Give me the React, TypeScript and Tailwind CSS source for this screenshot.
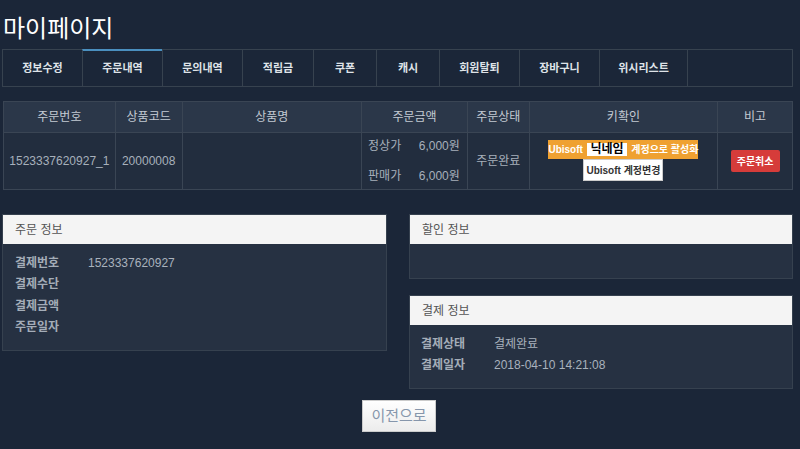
import React from "react"

const font = { fontFamily: '"Liberation Sans", "Noto Sans CJK KR", sans-serif' }

const tabs = [
  { label: "정보수정", w: "w-[80px]" },
  { label: "주문내역", w: "w-[80px]", active: true },
  { label: "문의내역", w: "w-[80px]" },
  { label: "적립금", w: "w-[71px]" },
  { label: "쿠폰", w: "w-[63px]" },
  { label: "캐시", w: "w-[63px]" },
  { label: "회원탈퇴", w: "w-[80px]" },
  { label: "장바구니", w: "w-[80px]" },
  { label: "위시리스트", w: "w-[88px]" },
  { label: "", w: "w-[106px]" },
]

const cols = [
  { title: "주문번호", w: "w-[111px]" },
  { title: "상품코드", w: "w-[67px]" },
  { title: "상품명", w: "w-[180px]" },
  { title: "주문금액", w: "w-[106px]" },
  { title: "주문상태", w: "w-[62px]" },
  { title: "키확인", w: "w-[189px]" },
  { title: "비고", w: "w-[75px]" },
]

function Panel({ title, children, bodyClass }: { title: string; children?: React.ReactNode; bodyClass: string }) {
  return (
    <div className="border border-[#36414f]">
      <div className="h-[29px] bg-[#f4f4f4] flex items-center pl-[12px] text-[12px] text-[#555]">{title}</div>
      <div className={`bg-[#263142] ${bodyClass}`}>{children}</div>
    </div>
  )
}

function InfoRow({ label, value }: { label: string; value?: string }) {
  return (
    <div className="flex h-[21.5px] items-center text-[12px]">
      <span className="w-[73px] font-bold text-[#a4adb8]">{label}</span>
      <span className="text-[#a9b2bd]">{value}</span>
    </div>
  )
}

export default function App() {
  return (
    <div className="w-[800px] h-[449px] overflow-hidden bg-[#1b2638]" style={font}>
      <h1 className="pt-[14px] pl-[3px] text-[24px] leading-[30px] text-white">마이페이지</h1>

      {/* tabs */}
      <div className="mt-[5px] ml-[2px] flex w-[791px] h-[38px] border-b border-[#37424f]">
        {tabs.map((t, i) => (
          <div
            key={i}
            className={`${t.w} flex items-center justify-center text-[11px] font-bold text-[#dfe3e8] ${
              i < tabs.length - 1 ? "border-l" : "border-x"
            } border-[#37424f] ${t.active ? "border-t-2 border-t-[#4a8fbf]" : "border-t"}`}
          >
            {t.label}
          </div>
        ))}
      </div>

      {/* order table */}
      <div className="mt-[14px] ml-[3px] w-[790px] border border-[#3a4554] text-[12px]">
        <div className="flex h-[30px] bg-[#2b3749]">
          {cols.map((c, i) => (
            <div
              key={i}
              className={`${c.w} flex items-center justify-center text-[#c3cad3] ${i > 0 ? "border-l border-[#3a4554]" : ""}`}
            >
              {c.title}
            </div>
          ))}
        </div>
        <div className="flex h-[57px] bg-[#222d3e] border-t border-[#3a4554] text-[#a7b0bb]">
          <div className="w-[111px] flex items-center justify-center">1523337620927_1</div>
          <div className="w-[67px] flex items-center justify-center border-l border-[#3a4554]">20000008</div>
          <div className="w-[180px] border-l border-[#3a4554]"></div>
          <div className="w-[106px] border-l border-[#3a4554] flex flex-col justify-center gap-[12px] pl-[6px] pr-[7px]">
            <div className="flex justify-between">
              <span>정상가</span>
              <span>6,000원</span>
            </div>
            <div className="flex justify-between">
              <span>판매가</span>
              <span>6,000원</span>
            </div>
          </div>
          <div className="w-[62px] flex items-center justify-center border-l border-[#3a4554]">주문완료</div>
          <div className="w-[189px] border-l border-[#3a4554] flex flex-col items-center pt-[7px]">
            <div className="h-[19px] w-[150px] bg-[#efa131] flex items-center justify-center gap-[4px] whitespace-nowrap text-[10px] font-bold text-white">
              <span>Ubisoft</span>
              <span className="bg-white text-black text-[12px] leading-[13px] w-[42px] text-center">닉네임</span>
              <span>계정으로 활성화</span>
            </div>
            <div className="h-[22px] w-[80px] bg-white border border-[#ccc] flex items-center justify-center whitespace-nowrap text-[10px] font-bold text-[#333]">
              Ubisoft 계정변경
            </div>
          </div>
          <div className="w-[75px] border-l border-[#3a4554] flex items-center justify-center">
            <div className="w-[49px] h-[22px] rounded-[2px] bg-[#d63c3a] flex items-center justify-center whitespace-nowrap text-[10px] font-bold text-white">
              주문취소
            </div>
          </div>
        </div>
      </div>

      {/* info panels */}
      <div className="mt-[24px] ml-[2px] flex gap-[22px]">
        <div className="w-[385px]">
          <Panel title="주문 정보" bodyClass="h-[106px] pt-[8px] pl-[12px]">
            <InfoRow label="결제번호" value="1523337620927" />
            <InfoRow label="결제수단" />
            <InfoRow label="결제금액" />
            <InfoRow label="주문일자" />
          </Panel>
        </div>
        <div className="w-[384px] flex flex-col gap-[16px]">
          <Panel title="할인 정보" bodyClass="h-[34px]" />
          <Panel title="결제 정보" bodyClass="h-[63px] pt-[8px] pl-[11px]">
            <InfoRow label="결제상태" value="결제완료" />
            <InfoRow label="결제일자" value="2018-04-10 14:21:08" />
          </Panel>
        </div>
      </div>

      <div className="mt-[11px] flex justify-center">
        <button className="ml-[-2px] w-[74px] h-[32px] bg-gradient-to-b from-white to-[#ececec] border border-[#ccc] text-[15px] text-[#8696ab]">
          이전으로
        </button>
      </div>
    </div>
  )
}
